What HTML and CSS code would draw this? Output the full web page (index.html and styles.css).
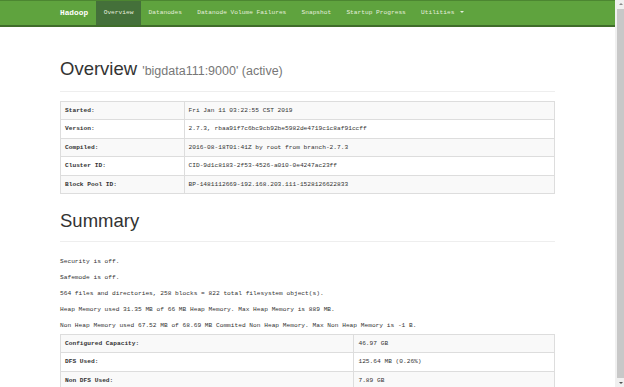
FILE: index.html
```html
<!DOCTYPE html>
<html lang="en">
<head>
    <meta charset="UTF-8">
    <meta name="viewport" content="width=device-width, initial-scale=1.0">
    <title>Namenode information</title>
    <link rel="stylesheet" href="styles.css">
</head>
<body>
    <div class="page">
        <nav class="navbar">
            <div class="navbar-inner">
                <a class="brand" href="#">Hadoop</a>
                <ul class="nav">
                    <li class="active"><a href="#tab-overview">Overview</a></li>
                    <li><a href="#tab-datanode">Datanodes</a></li>
                    <li><a href="#tab-datanode-volume-failures">Datanode Volume Failures</a></li>
                    <li><a href="#tab-snapshot">Snapshot</a></li>
                    <li><a href="#tab-startup-progress">Startup Progress</a></li>
                    <li><a href="#">Utilities <span class="caret"></span></a></li>
                </ul>
            </div>
        </nav>

        <div class="container">
            <div class="page-header">
                <h1>Overview <small>'bigdata111:9000' (active)</small></h1>
            </div>

            <table class="table table-bordered table-striped info">
                <tr><th>Started:</th><td>Fri Jan 11 03:22:55 CST 2019</td></tr>
                <tr><th>Version:</th><td>2.7.3, rbaa91f7c6bc9cb92be5982de4719c1c8af91ccff</td></tr>
                <tr><th>Compiled:</th><td>2016-08-18T01:41Z by root from branch-2.7.3</td></tr>
                <tr><th>Cluster ID:</th><td>CID-9d1c8183-2f53-4526-a010-0e4247ac23ff</td></tr>
                <tr><th>Block Pool ID:</th><td>BP-1481112669-192.168.203.111-1528126622833</td></tr>
            </table>

            <div class="page-header summary-header">
                <h1>Summary</h1>
            </div>

            <p>Security is off.</p>
            <p>Safemode is off.</p>
            <p>564 files and directories, 258 blocks = 822 total filesystem object(s).</p>
            <p>Heap Memory used 31.35 MB of 66 MB Heap Memory. Max Heap Memory is 889 MB.</p>
            <p>Non Heap Memory used 67.52 MB of 68.69 MB Commited Non Heap Memory. Max Non Heap Memory is -1 B.</p>

            <table class="table table-bordered table-striped summary">
                <tr><th>Configured Capacity:</th><td>46.97 GB</td></tr>
                <tr><th>DFS Used:</th><td>125.64 MB (0.26%)</td></tr>
                <tr><th>Non DFS Used:</th><td>7.89 GB</td></tr>
            </table>
        </div>
    </div>

    <!-- window scrollbar -->
    <div class="scrollbar">
        <span class="arrow up"></span>
        <span class="thumb"></span>
        <span class="arrow down"></span>
    </div>
</body>
</html>
```

FILE: styles.css
```css
body {
    margin: 0;
    display: flex;
    align-items: flex-start;
    font-family: "Liberation Mono", "DejaVu Sans Mono", monospace;
    font-size: 6.2px;
    color: #333;
    background-color: #fff;
}

a {
    text-decoration: none;
}

.page {
    flex: 1;
    min-width: 0;
}

.scrollbar {
    flex-shrink: 0;
    width: 9px;
    height: 100vh;
    background-color: #f0f0f0;
    display: flex;
    flex-direction: column;
    align-items: flex-end;
}

.scrollbar .thumb {
    flex: 1;
    width: 7px;
    margin: 1px 0;
    background-color: #c8c8c8;
}

.scrollbar .arrow {
    width: 7px;
    height: 8px;
    display: flex;
    align-items: center;
    justify-content: center;
}

.scrollbar .arrow::before {
    content: "";
    border-left: 2px solid transparent;
    border-right: 2px solid transparent;
}

.scrollbar .up::before {
    border-bottom: 2px solid #8a8a8a;
}

.scrollbar .down::before {
    border-top: 2px solid #505050;
}

.navbar {
    background-color: #5fa33e;
    border-top: 1px solid #4c8631;
    border-bottom: 2px solid #3f6d2a;
    height: 24px;
}

.navbar-inner {
    width: 495px;
    margin: 0 auto;
    display: flex;
}

.brand {
    font-size: 7.8px;
    font-weight: bold;
    line-height: 24px;
    color: #fff;
    margin-right: 8px;
}

.nav {
    list-style: none;
    display: flex;
    margin: 0;
    padding: 0;
}

.nav li a {
    display: block;
    padding: 0 7.6px;
    line-height: 24px;
    color: #e4eedd;
}

.nav li.active a {
    background-color: #44703a;
}

.caret {
    display: inline-block;
    width: 0;
    height: 0;
    margin-left: 2px;
    vertical-align: middle;
    border-top: 2px solid #e4eedd;
    border-left: 2px solid transparent;
    border-right: 2px solid transparent;
}

.container {
    width: 495px;
    margin: 0 auto;
}

.page-header {
    margin: 32px 0 9px;
    padding-bottom: 10px;
    border-bottom: 1px solid #eee;
}

.summary-header {
    margin: 0 0 12px;
}

.page-header h1 {
    margin: 0;
    font-family: "Liberation Sans", Arial, sans-serif;
    font-size: 18.5px;
    line-height: 20px;
    font-weight: normal;
    color: #333;
}

.page-header h1 small {
    font-size: 12.5px;
    color: #777;
}

.table {
    width: 100%;
    border-collapse: collapse;
    margin-bottom: 17px;
}

.table th, .table td {
    border: 1px solid #ddd;
    padding: 5px 4px;
    line-height: 7.4px;
    text-align: left;
}

.table th {
    font-weight: bold;
}

.table-striped tr:nth-child(odd) {
    background-color: #f9f9f9;
}

.info th {
    width: 25%;
}

.summary th {
    width: 59.4%;
}

p {
    margin: 0;
    line-height: 16px;
}
```
